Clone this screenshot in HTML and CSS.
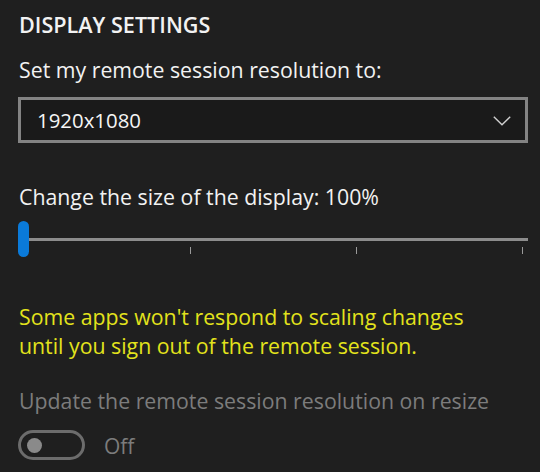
FILE: index.html
```html
<!DOCTYPE html>
<html lang="en">
<head>
<meta charset="utf-8">
<title>Display settings</title>
<link rel="stylesheet" href="styles.css">
</head>
<body>
<main class="panel">
  <h2 class="heading">DISPLAY SETTINGS</h2>
  <p class="label label-res">Set my remote session resolution to:</p>
  <div class="select">
    <span class="select-value">1920x1080</span>
    <svg class="chevron" width="18" height="10" viewBox="0 0 18 10" aria-hidden="true">
      <polyline points="0.8,0.8 9,8.8 17.2,0.8" fill="none" stroke="#d0d0d0" stroke-width="1.4"/>
    </svg>
  </div>
  <p class="label label-size">Change the size of the display: 100%</p>
  <div class="slider">
    <div class="track"></div>
    <div class="ticks">
      <span class="tick"></span><span class="tick"></span><span class="tick"></span><span class="tick"></span>
    </div>
    <div class="thumb"></div>
  </div>
  <p class="warning">Some apps won't respond to scaling changes<br>until you sign out of the remote session.</p>
  <p class="label label-disabled">Update the remote session resolution on resize</p>
  <div class="toggle-row">
    <span class="toggle"><span class="knob"></span></span>
    <span class="toggle-text">Off</span>
  </div>
</main>
</body>
</html>
```
FILE: styles.css
```css
html, body {
  margin: 0;
  padding: 0;
  background: #1f1f1f;
}
body {
  width: 540px;
  height: 472px;
  overflow: hidden;
  font-family: "Open Sans", "Noto Sans", sans-serif;
  color: #f2f2f2;
}
.panel {
  padding: 11px 12px 0 18px;
  display: flex;
  flex-direction: column;
}
.heading {
  margin: 0;
  font-size: 21.6px;
  font-weight: 600;
  line-height: 28px;
  padding-left: 1px;
}
.label {
  margin: 0;
  font-size: 21.3px;
  line-height: 28px;
  padding-left: 1px;
}
.label-res {
  margin-top: 17px;
}
.select {
  margin-top: 13px;
  height: 46px;
  box-sizing: border-box;
  border: 3px solid #838383;
  background: #1a1a1a;
  display: flex;
  align-items: center;
  justify-content: space-between;
  padding: 0 14px 0 16px;
}
.select-value {
  font-size: 20.4px;
  line-height: 28px;
  color: #f5f5f5;
}
.chevron {
  display: block;
  margin-top: 2px;
}
.label-size {
  margin-top: 40px;
}
.slider {
  position: relative;
  margin-top: 10px;
  height: 36px;
}
.track {
  position: absolute;
  left: 6px;
  right: 0;
  top: 17px;
  height: 3px;
  background: #8c8c8c;
}
.ticks {
  position: absolute;
  left: 6px;
  right: 5px;
  top: 26px;
  display: flex;
  justify-content: space-between;
}
.tick {
  width: 1px;
  height: 7px;
  background: #9a9a9a;
}
.thumb {
  position: absolute;
  left: 0;
  top: 0;
  width: 11px;
  height: 36px;
  border-radius: 6px;
  background: #0a7ad9;
}
.warning {
  margin: 45px 0 0;
  padding-left: 1px;
  font-size: 21.3px;
  line-height: 29px;
  color: #e3e31c;
}
.label-disabled {
  margin-top: 27px;
  color: #7c7c7c;
}
.toggle-row {
  margin-top: 15px;
  display: flex;
  align-items: center;
  gap: 19px;
}
.toggle {
  width: 67px;
  height: 30px;
  box-sizing: border-box;
  border: 3px solid #6c6c6c;
  border-radius: 15px;
  display: flex;
  align-items: center;
  padding-left: 6px;
}
.knob {
  width: 15px;
  height: 15px;
  border-radius: 50%;
  background: #8a8a8a;
}
.toggle-text {
  font-size: 21px;
  line-height: 28px;
  color: #7c7c7c;
  margin-top: 2px;
}
```
